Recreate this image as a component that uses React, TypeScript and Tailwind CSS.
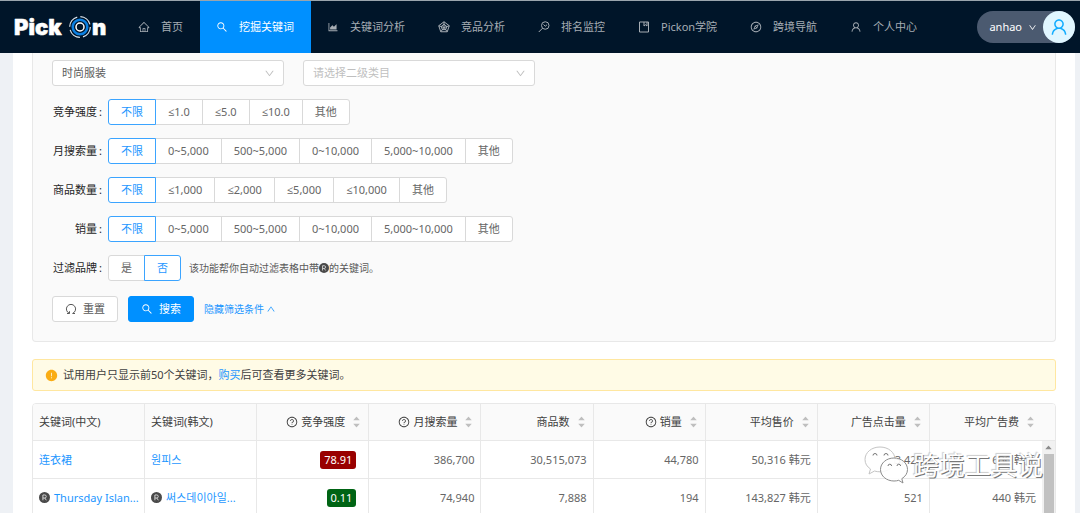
import { useState } from 'react';
import type { ComponentType, ReactNode } from 'react';
import {
  AiFillCaretDown,
  AiFillCaretUp,
  AiFillExclamationCircle,
  AiOutlineAreaChart,
  AiOutlineCompass,
  AiOutlineDown,
  AiOutlineHome,
  AiOutlineQuestionCircle,
  AiOutlineSearch,
  AiOutlineUp,
  AiOutlineUser,
} from 'react-icons/ai';
import { clsx } from 'clsx';

type IconProps = { size?: number; className?: string };

function PentagonIcon({ size = 12, className }: IconProps) {
  return (
    <svg width={size} height={size} viewBox="0 0 24 24" fill="none" stroke="currentColor" strokeWidth="2" className={className}>
      <path d="M12 1.5 22.5 9.5 18.5 21.5h-13L1.5 9.5Z" />
      <path d="M12 6.5 17.5 10.8 15.5 17.2h-7L6.5 10.8Z" />
      <path d="M12 1.5V13M22.5 9.5 12 13M18.5 21.5 12 13M5.5 21.5 12 13M1.5 9.5 12 13" />
    </svg>
  );
}

function RankIcon({ size = 12, className }: IconProps) {
  return (
    <svg width={size} height={size} viewBox="0 0 24 24" fill="none" stroke="currentColor" strokeWidth="2" className={className}>
      <circle cx="14.5" cy="9" r="7.5" />
      <path d="M9 14.500 1.500 22M11 7l3.500 3.500 3.500-3" />
    </svg>
  );
}

function BookIcon({ size = 12, className }: IconProps) {
  return (
    <svg width={size} height={size} viewBox="0 0 24 24" fill="none" stroke="currentColor" strokeWidth="2" className={className}>
      <path d="M3 2h18v20H3zM12 2v8l3-2.5 3 2.5V2" />
    </svg>
  );
}

function ResetIcon({ size = 12, className }: IconProps) {
  return (
    <svg width={size} height={size} viewBox="0 0 24 24" fill="none" stroke="currentColor" strokeWidth="2" className={className}>
      <path d="M8.5 20.5a9.2 9.2 0 1 1 7 0M4 21h5v-4.500M20 21h-5" />
    </svg>
  );
}

function BrandMark({ size = 11 }: IconProps) {
  return (
    <svg width={size} height={size} viewBox="0 0 24 24" className="shrink-0" aria-label="品牌">
      <circle cx="12" cy="12" r="12" fill="#4a4a4a" />
      <path d="M8.500 18V6.500h4a3.300 3.300 0 0 1 0 6.600h-4M12.500 13l3.500 5" fill="none" stroke="#ddd" strokeWidth="2" />
    </svg>
  );
}

function Logo() {
  return (
    <svg width="96" height="28" viewBox="0 0 96 28" role="img" aria-label="PickOn" className="shrink-0">
      <g fill="#fff" stroke="#fff" strokeWidth="0.500" strokeLinejoin="round" fontFamily="Inter, sans-serif" fontWeight="900" fontSize="22">
        <text x="1" y="22">Pick</text>
        <text x="79" y="22">n</text>
      </g>
      <circle cx="67" cy="14" r="10.300" fill="none" stroke="#dfe8f0" strokeWidth="1.200" strokeDasharray="13 3.200" />
      <circle cx="67" cy="14" r="7.300" fill="none" stroke="#0b7fe0" strokeWidth="2.500" />
      <circle cx="67" cy="14" r="4" fill="none" stroke="#fff" strokeWidth="1.500" />
    </svg>
  );
}

const navItems: { icon: ComponentType<IconProps>; label: string; active?: boolean }[] = [
  { icon: AiOutlineHome, label: '首页' },
  { icon: AiOutlineSearch, label: '挖掘关键词', active: true },
  { icon: AiOutlineAreaChart, label: '关键词分析' },
  { icon: PentagonIcon, label: '竞品分析' },
  { icon: RankIcon, label: '排名监控' },
  { icon: BookIcon, label: 'Pickon学院' },
  { icon: AiOutlineCompass, label: '跨境导航' },
  { icon: AiOutlineUser, label: '个人中心' },
];

function Header() {
  return (
    <header className="flex h-[53px] shrink-0 items-stretch border-t border-[#9aa5ad] bg-[#001529] pl-[13px] pr-[5px]">
      <a href="#" className="flex w-[109px] items-center">
        <Logo />
      </a>
      <nav className="flex">
        {navItems.map((item) => (
          <a
            key={item.label}
            href="#"
            className={clsx(
              'flex items-center gap-[11px] whitespace-nowrap pl-4 pr-[17px]',
              item.active ? 'bg-[#0090ff] text-white' : 'text-[#a6adb4]'
            )}
          >
            <item.icon size={12} />
            {item.label}
          </a>
        ))}
      </nav>
      <button className="ml-auto flex h-8 items-center self-center rounded-full bg-[#4b5a70] pl-3 text-white">
        anhao
        <AiOutlineDown size={9} className="mx-1.5" />
        <span className="flex h-8 w-8 items-center justify-center rounded-full bg-[#e0f6ff] text-[#12adff]">
          <AiOutlineUser size={20} />
        </span>
      </button>
    </header>
  );
}

function Select({ label, options, muted }: { label: string; options: string[]; muted?: boolean }) {
  return (
    <div className="relative w-[232px]">
      <select
        aria-label={label}
        className={clsx(
          'h-[26px] w-full appearance-none rounded-[3px] border border-[#d9d9d9] bg-white px-[9px]',
          muted ? 'text-[#bfbfbf]' : 'text-[#595959]'
        )}
      >
        {options.map((o) => (
          <option key={o}>{o}</option>
        ))}
      </select>
      <AiOutlineDown size={11} className="pointer-events-none absolute right-[9px] top-2 text-[#bfbfbf]" />
    </div>
  );
}

interface FilterRowProps {
  label: string;
  options: string[];
  initial?: string;
  children?: ReactNode;
}

function FilterRow({ label, options, initial = options[0], children }: FilterRowProps) {
  const [value, setValue] = useState(initial);

  return (
    <div className="flex items-center">
      <span className="flex w-[50px] justify-end gap-0.5 text-[#262626]">
        {label}
        <span>:</span>
      </span>
      <div role="radiogroup" aria-label={label} className="ml-1.5 flex">
        {options.map((o) => (
          <label
            key={o}
            className={clsx(
              'relative -ml-px flex h-[26px] cursor-pointer items-center border px-3 first:ml-0 first:rounded-l-[3px] last:rounded-r-[3px]',
              value === o ? 'z-10 border-[#3ba4ff] bg-white text-[#1e97ff]' : 'border-[#d9d9d9] bg-white text-[#666]'
            )}
          >
            <input type="radio" name={label} checked={value === o} onChange={() => setValue(o)} className="sr-only" />
            {o}
          </label>
        ))}
      </div>
      {children}
    </div>
  );
}

const searchVolumes = ['不限', '0~5,000', '500~5,000', '0~10,000', '5,000~10,000', '其他'];

function Filters() {
  return (
    <section className="flex flex-col gap-[13px] rounded-b-[4px] border border-t-0 border-[#e8e8e8] bg-[#fafafa] px-[19px] pb-[19px] pt-[7px]">
      <div className="flex gap-[19px]">
        <Select label="一级类目" options={['时尚服装']} />
        <Select label="二级类目" options={['请选择二级类目']} muted />
      </div>
      <FilterRow label="竞争强度" options={['不限', '≤1.0', '≤5.0', '≤10.0', '其他']} />
      <FilterRow label="月搜索量" options={searchVolumes} />
      <FilterRow label="商品数量" options={['不限', '≤1,000', '≤2,000', '≤5,000', '≤10,000', '其他']} />
      <FilterRow label="销量" options={searchVolumes} />
      <FilterRow label="过滤品牌" options={['是', '否']} initial="否">
        <p className="ml-2 flex items-center text-[10px] text-[#595959]">
          该功能帮你自动过滤表格中带
          <BrandMark size={10} />
          的关键词。
        </p>
      </FilterRow>
      <div className="mt-0.5 flex items-center gap-[10px]">
        <button className="flex h-[26px] items-center gap-1.5 rounded-[3px] border border-[#d9d9d9] bg-white px-3 text-[#595959]">
          <ResetIcon size={12} />
          重置
        </button>
        <button className="flex h-[26px] items-center gap-1.5 rounded-[3px] border border-[#0090ff] bg-[#0090ff] px-3 text-white">
          <AiOutlineSearch size={12} />
          搜索
        </button>
        <button className="flex items-center gap-0.5 text-[10px] text-[#1e97ff]">
          隐藏筛选条件
          <AiOutlineUp size={10} />
        </button>
      </div>
    </section>
  );
}

const columns: { title: string; help?: boolean; sort?: boolean }[] = [
  { title: '关键词(中文)' },
  { title: '关键词(韩文)' },
  { title: '竞争强度', help: true, sort: true },
  { title: '月搜索量', help: true, sort: true },
  { title: '商品数', sort: true },
  { title: '销量', help: true, sort: true },
  { title: '平均售价', sort: true },
  { title: '广告点击量', sort: true },
  { title: '平均广告费', sort: true },
];

const rows = [
  {
    zh: '连衣裙',
    ko: '원피스',
    brand: false,
    level: '78.91',
    high: true,
    values: ['386,700', '30,515,073', '44,780', '50,316 韩元', '3,428', '630 韩元'],
  },
  {
    zh: 'Thursday Islan...',
    ko: '써스데이아일...',
    brand: true,
    level: '0.11',
    high: false,
    values: ['74,940', '7,888', '194', '143,827 韩元', '521', '440 韩元'],
  },
];

function KeywordCell({ text, brand }: { text: string; brand: boolean }) {
  return (
    <td className="border-b border-r border-[#e8e8e8] pl-1.5">
      <div className="flex items-center gap-1">
        {brand && <BrandMark />}
        <a href="#" className="whitespace-nowrap text-[#1e97ff]">
          {text}
        </a>
      </div>
    </td>
  );
}

function KeywordTable() {
  return (
    <div className="flex overflow-hidden rounded-t-[4px] border border-[#e8e8e8]">
      <table className="w-full min-w-0 flex-1 table-fixed border-separate border-spacing-0">
        <thead>
          <tr className="h-[37px] bg-[#fafafa] text-[#404040]">
            {columns.map((col) => (
              <th
                key={col.title}
                className="border-b border-r border-[#e8e8e8] pl-1.5 pr-[7px] font-normal last:border-r-0"
              >
                <div className={clsx('flex items-center whitespace-nowrap', col.sort && 'justify-end')}>
                  {col.help && <AiOutlineQuestionCircle size={12} className="mr-[3px]" />}
                  {col.title}
                  {col.sort && (
                    <button aria-label={`${col.title}排序`} className="ml-[7px] flex flex-col text-[#bfbfbf]">
                      <AiFillCaretUp size={9} className="-mb-0.5" />
                      <AiFillCaretDown size={9} />
                    </button>
                  )}
                </div>
              </th>
            ))}
          </tr>
        </thead>
        <tbody>
          {rows.map((row) => (
            <tr key={row.zh} className="h-[38px]">
              <KeywordCell text={row.zh} brand={row.brand} />
              <KeywordCell text={row.ko} brand={row.brand} />
              <td className="border-b border-r border-[#e8e8e8] px-3 text-right">
                <span
                  className={clsx(
                    'inline-block rounded-[3px] px-1 leading-[18px] text-white',
                    row.high ? 'bg-[#990000]' : 'bg-[#006414]'
                  )}
                >
                  {row.level}
                </span>
              </td>
              {row.values.map((v, i) => (
                <td key={i} className="border-b border-r border-[#e8e8e8] px-1.5 text-right text-[#666] last:border-r-0">
                  {v}
                </td>
              ))}
            </tr>
          ))}
        </tbody>
      </table>
      <div className="flex w-[13px] flex-col" aria-hidden="true">
        <div className="h-[37px] border-b border-[#e8e8e8] bg-[#fafafa]" />
        <div className="flex flex-1 flex-col items-center bg-[#f1f1f1]">
          <AiFillCaretUp size={9} className="my-0.5 text-[#8c8c8c]" />
          <div className="w-[10px] flex-1 bg-[#c1c1c1]" />
        </div>
      </div>
    </div>
  );
}

function Watermark() {
  return (
    <div className="pointer-events-none absolute bottom-7 right-[37px] flex items-center gap-1">
      <svg width="46" height="40" viewBox="0 0 46 40" fill="#fff" fillOpacity="0.9" stroke="#8c8c8c" strokeWidth="1">
        <path d="M17 2C8.500 2 2 7.500 2 14.500c0 4 2 7.200 5.500 9.500L6 29l5.500-3c2 .6 3.500.8 5.500.8 8.500 0 15-5.300 15-12.300S25.500 2 17 2Z" stroke="#c4c4c4" />
        <path d="M31 13c-7.500 0-13.500 5-13.500 11.500S23.500 36 31 36c1.700 0 3.200-.2 4.700-.7L40 38l-1.200-4.300c3.600-2.200 5.700-5.400 5.700-9.200C44.500 18 38.500 13 31 13Z" />
        <path d="M10 10.500a2 2 0 0 1 4 0M21 10.500a2 2 0 0 1 4 0M25 21a1.800 1.800 0 0 1 3.600 0M34 21a1.800 1.800 0 0 1 3.600 0" fill="none" stroke="#777" />
      </svg>
      <span className="text-[26px] leading-8 text-white [text-shadow:1px_1px_0px_#777,-1px_-1px_1px_#ccc]">跨境工具说</span>
    </div>
  );
}

export default function App() {
  return (
    <div className="relative flex h-screen flex-col overflow-hidden bg-[#eef1f5] font-['Noto_Sans','Open_Sans','Noto_Sans_CJK_SC','Noto_Sans_CJK_KR',sans-serif] text-[11px] leading-4">
      <Header />
      <main className="ml-[13px] mr-[5px] min-h-0 flex-1 overflow-hidden bg-white px-[19px]">
        <Filters />
        <div role="alert" className="mb-3 mt-[17px] flex h-8 items-center rounded-[3px] border border-[#ffe7a0] bg-[#fffbe6] px-3 text-[#404040]">
          <AiFillExclamationCircle size={13} className="mr-[5px] text-[#faad14]" />
          <p>
            试用用户只显示前50个关键词，
            <a href="#" className="text-[#1e97ff]">
              购买
            </a>
            后可查看更多关键词。
          </p>
        </div>
        <KeywordTable />
      </main>
      <Watermark />
    </div>
  );
}
